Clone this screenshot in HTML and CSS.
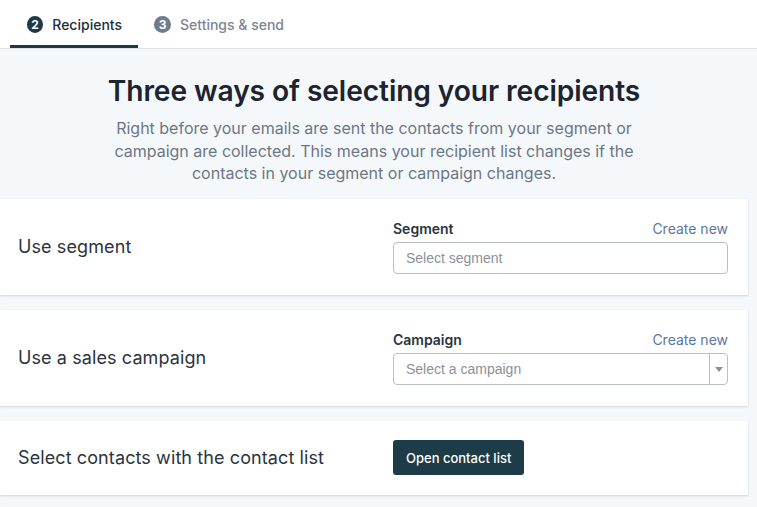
FILE: index.html
```html
<!DOCTYPE html>
<html>
<head>
<meta charset="utf-8">
<link rel="stylesheet" href="styles.css">
</head>
<body>
<div class="tabs">
  <div class="tab active"><span class="num">2</span>Recipients</div>
  <div class="tab"><span class="num">3</span>Settings &amp; send</div>
</div>
<main class="page">
  <header class="intro">
    <h1>Three ways of selecting your recipients</h1>
    <p>Right before your emails are sent the contacts from your segment or campaign are collected. This means your recipient list changes if the contacts in your segment or campaign changes.</p>
  </header>
  <section class="card">
    <div class="card-label">Use segment</div>
    <div class="field">
      <div class="field-head"><span class="field-title">Segment</span><a class="link">Create new</a></div>
      <div class="input">Select segment</div>
    </div>
  </section>
  <section class="card">
    <div class="card-label">Use a sales campaign</div>
    <div class="field">
      <div class="field-head"><span class="field-title">Campaign</span><a class="link">Create new</a></div>
      <div class="input select"><span class="select-text">Select a campaign</span><span class="caret"></span></div>
    </div>
  </section>
  <section class="card card-short">
    <div class="card-label">Select contacts with the contact list</div>
    <div class="field">
      <button class="btn">Open contact list</button>
    </div>
  </section>
</main>
</body>
</html>
```
FILE: styles.css
```css
* { box-sizing: border-box; }
html, body { margin: 0; padding: 0; }
body {
  font-family: Inter, "Noto Sans", sans-serif;
  background: #f5f8fb;
  color: #2b3440;
  width: 757px;
  height: 507px;
  overflow: hidden;
}
.tabs {
  background: #fff;
  height: 49px;
  border-bottom: 1px solid #e1e5ea;
  display: flex;
  padding-left: 10px;
}
.tab {
  display: flex;
  align-items: center;
  height: 48px;
  padding: 0 16px 0 17px;
  font-size: 14px;
  color: #7a8593;
  font-weight: 500;
  border-bottom: 3px solid transparent;
  padding-top: 3px;
}
.tab.active {
  color: #22303c;
  border-bottom-color: #1e3a47;
  width: 128px;
}
.tab .num {
  width: 17px;
  height: 17px;
  border-radius: 50%;
  background: #6d7c8f;
  color: #fff;
  font-size: 12px;
  font-weight: 700;
  display: inline-flex;
  align-items: center;
  justify-content: center;
  margin-right: 9px;
}
.tab.active .num { background: #1e3a47; }
.tab + .tab { padding-left: 16px; }
.page { padding-right: 9px; }
.intro {
  text-align: center;
  padding: 24px 0 14px;
}
.intro h1 {
  margin: 0;
  font-size: 28.2px;
  font-weight: 600;
  color: #1c2430;
  line-height: 36px;
  letter-spacing: -0.1px;
}
.intro p {
  margin: 8px auto 0;
  width: 540px;
  font-size: 16px;
  line-height: 22.5px;
  color: #6c7785;
}
.card {
  background: #fff;
  height: 96px;
  margin-bottom: 15px;
  display: flex;
  align-items: center;
  box-shadow: 0 1px 2px rgba(30, 40, 55, 0.16);
  padding: 0 20px 0 18px;
}
.card-short { height: 74px; }
.card-label {
  width: 375px;
  font-size: 18px;
  letter-spacing: 0.1px;
  color: #2b3440;
}
.field { flex: 1; }
.field-head {
  display: flex;
  justify-content: space-between;
  align-items: baseline;
  margin-bottom: 5px;
}
.field-title {
  font-size: 14px;
  font-weight: 600;
  color: #2b3440;
}
.link {
  font-size: 14px;
  color: #5b76a3;
}
.input {
  height: 32px;
  border: 1px solid #b8bfc8;
  border-radius: 4px;
  font-family: Arial, "Liberation Sans", sans-serif;
  font-size: 14px;
  color: #8b9199;
  display: flex;
  align-items: center;
  padding-left: 12px;
}
.select { padding-right: 0; }
.select-text { flex: 1; }
.caret {
  width: 18px;
  height: 100%;
  border-left: 1px solid #b8bfc8;
  position: relative;
}
.caret::after {
  content: "";
  position: absolute;
  left: 5px;
  top: 13px;
  border-left: 4px solid transparent;
  border-right: 4px solid transparent;
  border-top: 5px solid #8a9099;
}
.btn {
  height: 35px;
  padding: 0 13px;
  border: none;
  border-radius: 3px;
  background: #1e3c48;
  color: #fff;
  font-family: Inter, "Noto Sans", sans-serif;
  font-size: 13px;
  font-weight: 500;
}
```
